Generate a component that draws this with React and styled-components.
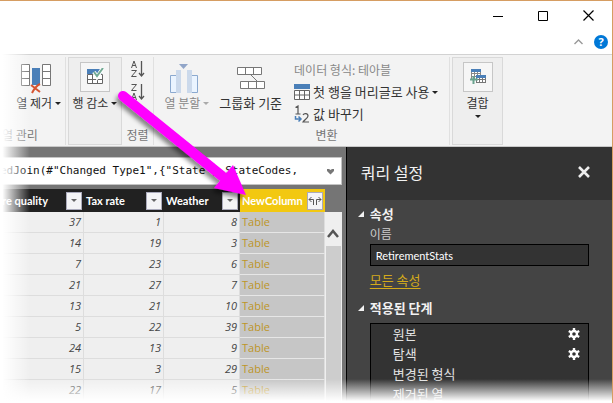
import React from 'react';
import styled, { createGlobalStyle, css } from 'styled-components';

const ui = '"Open Sans", "Noto Sans CJK KR", sans-serif';
const korean = '"Noto Sans CJK KR", sans-serif';

const GlobalStyle = createGlobalStyle`
  *, *::before, *::after { box-sizing: border-box; }
  body { margin: 0; background: #fff; font-family: ${korean}; overflow: hidden; }
  button { font: inherit; color: inherit; border: 0; padding: 0; background: none; }
  svg { display: block; flex: none; }
`;

const Window = styled.div`
  position: relative;
  display: flex;
  flex-direction: column;
  height: 100vh;
  overflow: hidden;
  border-top: 1px solid #d69d62;
  border-right: 1px solid #d69d62;
`;

const TitleBar = styled.header`
  flex: none;
  background: #fff;
`;

const WindowControls = styled.div`
  display: flex;
  justify-content: flex-end;
  align-items: center;
  gap: 35px;
  height: 29px;
  padding-right: 18px;
`;

const RibbonControls = styled.div`
  display: flex;
  justify-content: flex-end;
  align-items: center;
  gap: 11px;
  height: 24px;
  padding-right: 4px;
`;

const IconButton = styled.button`
  display: flex;
  align-items: center;
  justify-content: center;
`;

const HelpButton = styled.button`
  width: 14px;
  height: 14px;
  border-radius: 50%;
  background: #0078d7;
  color: #fff;
  font: 700 11px/14px ${ui};
  text-align: center;
`;

const Ribbon = styled.nav`
  flex: none;
  display: flex;
  height: 93px;
  padding: 2px 0 1px;
  background: #f3f3f3;
  border-top: 1px solid #d2d2d2;
  border-bottom: 1px solid #c8c8c8;
`;

const Group = styled.section`
  display: flex;
  flex-direction: column;
  flex: none;
  width: ${(p) => p.$width}px;
  padding: 0 2px;
  border-right: ${(p) => (p.$divided ? '1px solid #e0e0e0' : '0')};
`;

const GroupBody = styled.div`
  display: flex;
  flex: 1;
  gap: ${(p) => (p.$align === 'flex-end' ? 14 : 10)}px;
  justify-content: ${(p) => p.$align || 'center'};
  padding-right: ${(p) => (p.$align === 'flex-end' ? 2 : 0)}px;
`;

const GroupLabel = styled.div`
  height: 20px;
  padding-left: ${(p) => p.$inset || 0}px;
  color: #777;
  font-size: 12px;
  line-height: 20px;
  white-space: nowrap;
  text-align: ${(p) => p.$align || 'center'};
`;

const ToolButton = styled.button`
  display: flex;
  flex: none;
  flex-direction: column;
  align-items: center;
  padding-top: 7px;
  color: ${(p) => (p.$muted ? '#888' : '#333')};
  font-size: ${(p) => (p.$large ? 13 : 12)}px;
  line-height: 18px;
  white-space: nowrap;
  ${(p) => p.$boxed && css`
    gap: 2px;
    width: ${p.$width}px;
    margin-left: 2px;
    background: #eee;
    border: 1px solid #d9d9d9;
    padding-top: 4px;
  `}
`;

const IconBox = styled.span`
  display: flex;
  align-items: center;
  justify-content: center;
  width: ${(p) => (p.$empty ? 0 : 30)}px;
  height: 30px;
  margin-right: ${(p) => (p.$beforeCaret ? 6 : 0)}px;
  border: ${(p) => (p.$framed ? '1px solid #c6c6c6' : '0')};
  background: ${(p) => (p.$framed ? '#f6f6f6' : 'none')};
`;

const CaretLabel = styled.span`
  display: flex;
  flex-direction: ${(p) => (p.$stacked ? 'column' : 'row')};
  align-items: center;
  gap: 3px;
`;

const Caret = styled.span`
  width: 0;
  height: 0;
  border: 3px solid transparent;
  border-top-color: ${(p) => p.$color || '#222'};
  border-bottom: 0;
`;

const SortStack = styled.div`
  display: flex;
  flex-direction: column;
  gap: 5px;
  padding-top: 3px;
`;

const CommandList = styled.div`
  display: flex;
  flex-direction: column;
  align-items: flex-start;
  padding: 2px 0 0 2px;
`;

const Command = styled.button`
  display: flex;
  align-items: center;
  gap: 3px;
  height: 22px;
  color: ${(p) => (p.$muted ? '#888' : '#333')};
  font-size: ${(p) => (p.$muted ? 12 : 13)}px;
  line-height: 22px;
  white-space: nowrap;
`;

const Workspace = styled.main`
  display: flex;
  flex: 1;
  min-height: 0;
  background: #757575;
`;

const Editor = styled.div`
  display: flex;
  flex-direction: column;
  gap: 4px;
  flex: 1;
  min-width: 0;
  padding: 10px 4px 0 0;
`;

const FormulaBar = styled.div`
  display: flex;
  align-items: center;
  flex: none;
  height: 28px;
  padding-right: 6px;
  background: #fff;
  border: 1px solid #c4c4c4;
  border-left: 0;
`;

const FormulaInput = styled.input`
  flex: 1;
  min-width: 0;
  border: 0;
  padding: 0;
  outline: 0;
  background: none;
  color: #111;
  font: 11px/18px "DejaVu Sans Mono", monospace;
`;

const GridArea = styled.div`
  display: flex;
  flex: 1;
  min-height: 0;
  overflow: hidden;
`;

const GridView = styled.div`
  flex: 1;
  min-width: 0;
`;

const Grid = styled.table`
  width: 100%;
  table-layout: fixed;
  border-collapse: separate;
  border-spacing: 0;
  font-family: ${ui};
  font-size: 11px;
`;

const HeaderCell = styled.th`
  width: ${(p) => (p.$width ? `${p.$width}px` : 'auto')};
  height: 23px;
  padding: 0 2px;
  background: ${(p) => (p.$selected ? '#f2c811' : '#212121')};
  color: #fff;
  font: 700 11px/20px Lato, sans-serif;
`;

const HeaderContent = styled.div`
  display: flex;
  align-items: center;
  justify-content: space-between;
  white-space: nowrap;
`;

const ScrolledHeaderContent = styled(HeaderContent)`
  justify-content: flex-end;
  gap: 18px;
`;

const FilterButton = styled.button`
  display: flex;
  align-items: center;
  justify-content: center;
  flex: none;
  width: 16px;
  height: 18px;
  background: #f4f4f6;
  border: 1px solid #aab;
`;

const Cell = styled.td`
  height: 21px;
  padding: 0 2px;
  background: #efefef;
  border-right: 1px solid #ddd;
  border-bottom: 1px solid #ddd;
  color: #444;
  font-style: italic;
  line-height: 20px;
  text-align: right;
`;

const LinkCell = styled(Cell)`
  background: #c6c6c6;
  border-bottom-color: #e6e6e6;
  color: #bd9526;
  font-style: normal;
  text-align: left;
`;

const ScrollColumn = styled.div`
  display: flex;
  flex-direction: column;
  flex: none;
  width: 17px;
  padding-top: 23px;
`;

const ScrollUp = styled.button`
  display: flex;
  align-items: center;
  justify-content: center;
  flex: none;
  height: 34px;
  padding-top: 9px;
  background: #efefef;
`;

const ScrollThumb = styled.div`
  flex: 1;
  background: #cdcdcd;
  border: solid #efefef;
  border-width: 0 1px;
`;

const Settings = styled.aside`
  display: flex;
  flex-direction: column;
  flex: none;
  width: 43.5%;
  background: #444;
  border-left: 1px solid #000;
  color: #f2f2f2;
`;

const SettingsHeader = styled.div`
  display: flex;
  align-items: center;
  justify-content: space-between;
  flex: none;
  height: 53px;
  padding: 0 22px 3px 14px;
  background: #333;
`;

const SettingsTitle = styled.h1`
  margin: 0;
  font-size: 16px;
  font-weight: 400;
  line-height: 20px;
`;

const SettingsBody = styled.div`
  display: flex;
  flex-direction: column;
  padding: 4px 23px 0 11px;
`;

const SectionTitle = styled.h2`
  display: flex;
  align-items: center;
  gap: 6px;
  margin: 0;
  font-size: 13px;
  font-weight: 700;
  line-height: 20px;
`;

const SectionBody = styled.div`
  display: flex;
  flex-direction: column;
  align-items: flex-start;
  padding: 0 0 8px 12px;
  font-size: 13px;
  line-height: 20px;
`;

const FieldLabel = styled.label`
  color: #ccc;
  font-size: 12px;
`;

const NameInput = styled.input`
  width: 100%;
  height: 22px;
  margin-bottom: 4px;
  padding: 0 5px;
  border: 1px solid #000;
  outline: 0;
  background: #333;
  color: #fff;
  font: 11px/20px Lato, sans-serif;
`;

const PropertiesLink = styled.a`
  color: #d3aa1b;
  text-underline-offset: 3px;
`;

const Steps = styled.ol`
  width: 100%;
  margin: 5px 0 0;
  padding: 0 8px 0 22px;
  list-style: none;
  background: #333;
  border: 1px solid #000;
`;

const Step = styled.li`
  display: flex;
  align-items: center;
  justify-content: space-between;
  height: 20px;
  color: #e2e2e2;
  line-height: 16px;
`;

const Fade = styled.div`
  position: absolute;
  z-index: 2;
  pointer-events: none;
  background: linear-gradient(${(p) => (p.$edge === 'left' ? 'to right' : 'to top')}, #fff 8%, rgba(255, 255, 255, 0));
  ${(p) => (p.$edge === 'left'
    ? 'top: -1px; bottom: 0; left: 0; width: 30px;'
    : 'left: 0; right: -1px; bottom: 0; height: 24px;')}
`;

const Pointer = styled.svg`
  position: absolute;
  z-index: 1;
  top: 80px;
  left: 110px;
  pointer-events: none;
`;

const RemoveColumnsIcon = () => (
  <svg width="30" height="30" viewBox="0 0 30 30" fill="#fff" stroke="#777">
    <path d="M.5.5h8v21h-8zM.5 7.500h8M.5 14.500h8M21.500.5h8v21h-8zM21.500 7.500h8M21.500 14.500h8" />
    <path d="M11 4h8v17h-8z" fill="#4a7fb8" stroke="none" />
    <path d="M10 21l9 7M19 20c-4 2-6 5-8 9" fill="none" stroke="#d65532" strokeWidth="2" />
  </svg>
);

const ReduceRowsIcon = () => (
  <svg width="18" height="18" viewBox="0 0 18 18">
    <path d="M1 1h15v5H1z" fill="#4a7fb8" />
    <path d="M1.500 6.500h15v9h-15zM1.500 11.500h15M6.500 6.500v9M11.500 6.500v9" fill="#fff" stroke="#666" />
    <path d="M8 4l3 5 6-9" fill="none" stroke="#fff" strokeWidth="4" />
    <path d="M8 4l3 4 6-8" fill="none" stroke="#72aa94" strokeWidth="2" />
  </svg>
);

const SortIcon = ({ descending }) => (
  <svg width="16" height="18" viewBox="0 0 16 18" fill="none" stroke="#555">
    <path d="M1.500 8L4 1l2.500 7M2 5.500h4" transform={descending ? 'translate(0 9)' : undefined} />
    <path d={descending ? 'M1.500 1.500h5l-5 6h5' : 'M1.500 10.500h5l-5 6h5'} />
    <path d="M11.500 1v14.500M9 13l2.500 3 2.500-3" strokeWidth="1.300" />
  </svg>
);

const SplitIcon = () => (
  <svg width="30" height="30" viewBox="0 0 30 30">
    <path d="M10 0h9l-4.500 5z" fill="#91a5c8" />
    <path d="M1.500 11.500h6v17h-6zM22.500 11.500h6v17h-6z" fill="#eaf4ff" stroke="#8ba9cf" />
    <path d="M7 6h5v23H7zM18 6h5v23h-5z" fill="#cbd9eb" />
  </svg>
);

const GroupByIcon = () => (
  <svg width="30" height="30" viewBox="0 0 30 30" fill="#fff" stroke="#777">
    <path d="M1.500 3.500h24v7h-24zM9.500 3.500v7M17.500 3.500v7M4.500 17.500h24v7h-24zM12.500 17.500v7M20.500 17.500v7M15 11l6 6" />
  </svg>
);

const TableIcon = () => (
  <svg width="16" height="16" viewBox="0 0 16 16">
    <path d="M0 0h16v5H0z" fill="#4a7fb8" />
    <path d="M.5 6.500h15v9H.5zM.5 11h15M5.500 6v10M10.500 6v10" fill="#fff" stroke="#666" />
  </svg>
);

const ReplaceIcon = () => (
  <svg width="16" height="18" viewBox="0 0 16 18" fill="none" stroke="#555" strokeWidth="1.200">
    <path d="M1.500 2.500L4 1v8M1.500 9h5M9 10c1-2 5-2 5 1 0 2-4 4-5 6h6" />
    <path d="M1.500 11v3h5M4.500 11.500L7 14l-2.500 2.500" stroke="#4a7fb8" strokeWidth="1.500" />
  </svg>
);

const CombineIcon = () => (
  <svg width="18" height="18" viewBox="0 0 18 18">
    <path d="M2 2h10v10H2z" fill="#fff" />
    <path d="M2 5.500h10M2 8.500h10M2.500 4v7M5.500 4v7M8.500 4v7M11.500 4v5" stroke="#888" />
    <path d="M2 1h10v3H2z" fill="#4a7fb8" />
    <path d="M7 8h10v7H7z" fill="#fff" />
    <path d="M7 11.500h10M7 14.500h10M7.500 8v7M10.500 8v7M13.500 8v7M16.500 8v7" stroke="#777" />
    <path d="M7 7h10v3H7z" fill="#4a7fb8" />
    <path d="M4.500 8v8M1 11.500h8" stroke="#69a38e" strokeWidth="2" />
  </svg>
);

const ExpandIcon = () => (
  <svg width="14" height="11" viewBox="0 0 14 11" fill="none" stroke="#555">
    <path d="M5.500 10V4.500H1M3.500 2L1 4.500 3.500 7M8.500 10V4.500H13M10.500 2L13 4.500 10.500 7" />
  </svg>
);

const GearIcon = () => (
  <svg width="12" height="12" viewBox="0 0 12 12">
    <circle cx="6" cy="6" r="3" fill="none" stroke="#fff" strokeWidth="2.400" />
    <path d="M6 0v2.500M6 9.500V12M.8 3L3 4.300M9 7.700L11.200 9M.8 9L3 7.700M9 4.300L11.200 3" stroke="#fff" strokeWidth="2.400" />
  </svg>
);

const OpenMarker = () => (
  <svg width="6" height="6" viewBox="0 0 6 6"><path d="M6 0v6H0z" fill="#f2f2f2" /></svg>
);

const columns = [
  { name: 're quality', width: 84, scrolled: true },
  { name: 'Tax rate', width: 80 },
  { name: 'Weather', width: 76 },
];

const rows = [
  [37, 1, 8], [14, 19, 3], [7, 23, 6], [21, 27, 7], [13, 21, 10],
  [5, 22, 39], [24, 13, 9], [15, 3, 29], [22, 17, 5],
];

const steps = [
  { name: '원본', configurable: true },
  { name: '탐색', configurable: true },
  { name: '변경된 형식' },
  { name: '제거된 열' },
];

export default function App() {
  return (
    <Window>
      <GlobalStyle />
      <TitleBar>
        <WindowControls>
          <IconButton aria-label="최소화">
            <svg width="10" height="10" viewBox="0 0 10 10"><path d="M0 5.500h10" stroke="#000" /></svg>
          </IconButton>
          <IconButton aria-label="최대화">
            <svg width="10" height="10" viewBox="0 0 10 10"><path d="M.5.5h9v9h-9z" fill="none" stroke="#000" /></svg>
          </IconButton>
          <IconButton aria-label="닫기">
            <svg width="11" height="11" viewBox="0 0 11 11"><path d="M.5.5l10 10M10.500.5l-10 10" stroke="#000" strokeWidth="1.200" /></svg>
          </IconButton>
        </WindowControls>
        <RibbonControls>
          <IconButton aria-label="리본 축소">
            <svg width="9" height="6" viewBox="0 0 9 6"><path d="M.5 5l4-4 4 4" fill="none" stroke="#999" strokeWidth="1.400" /></svg>
          </IconButton>
          <HelpButton aria-label="도움말">?</HelpButton>
        </RibbonControls>
      </TitleBar>

      <Ribbon>
        <Group $width={66} $divided>
          <GroupBody $align="flex-end">
            <ToolButton>
              <IconBox $empty />
              택
            </ToolButton>
            <ToolButton>
              <IconBox $beforeCaret><RemoveColumnsIcon /></IconBox>
              <CaretLabel>열 제거<Caret /></CaretLabel>
            </ToolButton>
          </GroupBody>
          <GroupLabel $align="left">열 관리</GroupLabel>
        </Group>

        <ToolButton $boxed $width={54}>
          <IconBox $framed><ReduceRowsIcon /></IconBox>
          <CaretLabel>행 감소<Caret /></CaretLabel>
        </ToolButton>

        <Group $width={32} $divided>
          <GroupBody>
            <SortStack>
              <IconButton aria-label="오름차순 정렬"><SortIcon /></IconButton>
              <IconButton aria-label="내림차순 정렬"><SortIcon descending /></IconButton>
            </SortStack>
          </GroupBody>
          <GroupLabel>정렬</GroupLabel>
        </Group>

        <Group $width={296} $divided>
          <GroupBody>
            <ToolButton $muted>
              <IconBox $beforeCaret><SplitIcon /></IconBox>
              <CaretLabel>열 분할<Caret $color="#aaa" /></CaretLabel>
            </ToolButton>
            <ToolButton $large>
              <IconBox><GroupByIcon /></IconBox>
              그룹화 기준
            </ToolButton>
            <CommandList>
              <Command $muted>데이터 형식: 테아블</Command>
              <Command><TableIcon />첫 행을 머리글로 사용<Caret /></Command>
              <Command><ReplaceIcon />값 바꾸기</Command>
            </CommandList>
          </GroupBody>
          <GroupLabel $inset={50}>변환</GroupLabel>
        </Group>

        <ToolButton $boxed $width={51}>
          <IconBox $framed><CombineIcon /></IconBox>
          <CaretLabel $stacked>결합<Caret /></CaretLabel>
        </ToolButton>
      </Ribbon>

      <Workspace>
        <Editor>
          <FormulaBar>
            <FormulaInput aria-label="수식" defaultValue={'edJoin(#"Changed Type1",{"State"},StateCodes,'} />
            <IconButton aria-label="수식 확장">
              <svg width="9" height="7" viewBox="0 0 9 7"><path d="M1 1h2l1.500 1L6 1h2v2L4.500 6.500 1 3z" fill="#777" /></svg>
            </IconButton>
          </FormulaBar>
          <GridArea>
            <GridView>
              <Grid>
                <thead>
                  <tr>
                    {columns.map((c) => {
                      const Content = c.scrolled ? ScrolledHeaderContent : HeaderContent;
                      return (
                        <HeaderCell key={c.name} $width={c.width}>
                          <Content>
                            {c.name}
                            <FilterButton aria-label={`${c.name} 필터`}><Caret $color="#666" /></FilterButton>
                          </Content>
                        </HeaderCell>
                      );
                    })}
                    <HeaderCell $selected>
                      <HeaderContent>
                        NewColumn
                        <FilterButton aria-label="NewColumn 확장"><ExpandIcon /></FilterButton>
                      </HeaderContent>
                    </HeaderCell>
                  </tr>
                </thead>
                <tbody>
                  {rows.map((row, i) => (
                    <tr key={i}>
                      {row.map((value, j) => <Cell key={j}>{value}</Cell>)}
                      <LinkCell>Table</LinkCell>
                    </tr>
                  ))}
                </tbody>
              </Grid>
            </GridView>
            <ScrollColumn>
              <ScrollUp aria-label="위로 스크롤">
                <svg width="12" height="10" viewBox="0 0 12 10"><path d="M1 8l5-6 5 6" fill="none" stroke="#555" strokeWidth="2.500" /></svg>
              </ScrollUp>
              <ScrollThumb />
            </ScrollColumn>
          </GridArea>
        </Editor>

        <Settings>
          <SettingsHeader>
            <SettingsTitle>쿼리 설정</SettingsTitle>
            <IconButton aria-label="쿼리 설정 닫기">
              <svg width="12" height="12" viewBox="0 0 12 12"><path d="M1 1l10 10M11 1L1 11" stroke="#eee" strokeWidth="2.600" /></svg>
            </IconButton>
          </SettingsHeader>
          <SettingsBody>
            <SectionTitle><OpenMarker />속성</SectionTitle>
            <SectionBody>
              <FieldLabel htmlFor="query-name">이름</FieldLabel>
              <NameInput id="query-name" defaultValue="RetirementStats" />
              <PropertiesLink href="#properties">모든 속성</PropertiesLink>
            </SectionBody>
            <SectionTitle><OpenMarker />적용된 단계</SectionTitle>
            <SectionBody>
              <Steps>
                {steps.map((step) => (
                  <Step key={step.name}>
                    {step.name}
                    {step.configurable && (
                      <IconButton aria-label={`${step.name} 설정`}><GearIcon /></IconButton>
                    )}
                  </Step>
                ))}
              </Steps>
            </SectionBody>
          </SettingsBody>
        </Settings>
      </Workspace>

      <Pointer width="150" height="130" viewBox="0 0 150 130" aria-hidden="true">
        <defs>
          <filter id="pointer-shadow" x="-20%" y="-20%" width="140%" height="140%">
            <feDropShadow dx="-2" dy="4" stdDeviation="2" floodColor="#000" floodOpacity="0.45" />
          </filter>
        </defs>
        <g fill="#f0f" filter="url(#pointer-shadow)">
          <path d="M13 15L112 95" stroke="#f0f" strokeWidth="10" strokeLinecap="round" />
          <path d="M136 114L123 84L104 107z" />
        </g>
      </Pointer>
      <Fade $edge="left" />
      <Fade $edge="bottom" />
    </Window>
  );
}
